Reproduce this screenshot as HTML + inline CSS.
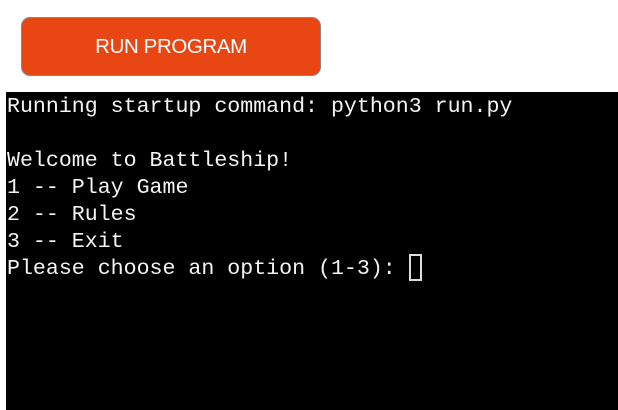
<!DOCTYPE html>
<html><head><style>
html,body{margin:0;padding:0;background:#fff;width:618px;height:410px;overflow:hidden}
.btn{position:absolute;left:21px;top:17px;width:298px;height:57px;background:#e84714;border:1px solid #888;border-radius:9px;color:#fff;font:20.5px "Liberation Sans",sans-serif;display:flex;align-items:center;justify-content:center;letter-spacing:-0.4px}
.term{position:absolute;left:6px;top:92px;width:612px;height:318px;background:#000;color:#f4f4f4;font:21.6px/27px "Liberation Mono",monospace;white-space:pre;padding:2px 0 0 1px;box-sizing:border-box}
.cur{position:absolute;left:403px;top:162px;width:9px;height:23px;border:2px solid #ddd}
</style></head><body>
<div class="btn">RUN PROGRAM</div>
<div class="term">Running startup command: python3 run.py

Welcome to Battleship!
1 -- Play Game
2 -- Rules
3 -- Exit
Please choose an option (1-3): <span class="cur"></span></div>
</body></html>
